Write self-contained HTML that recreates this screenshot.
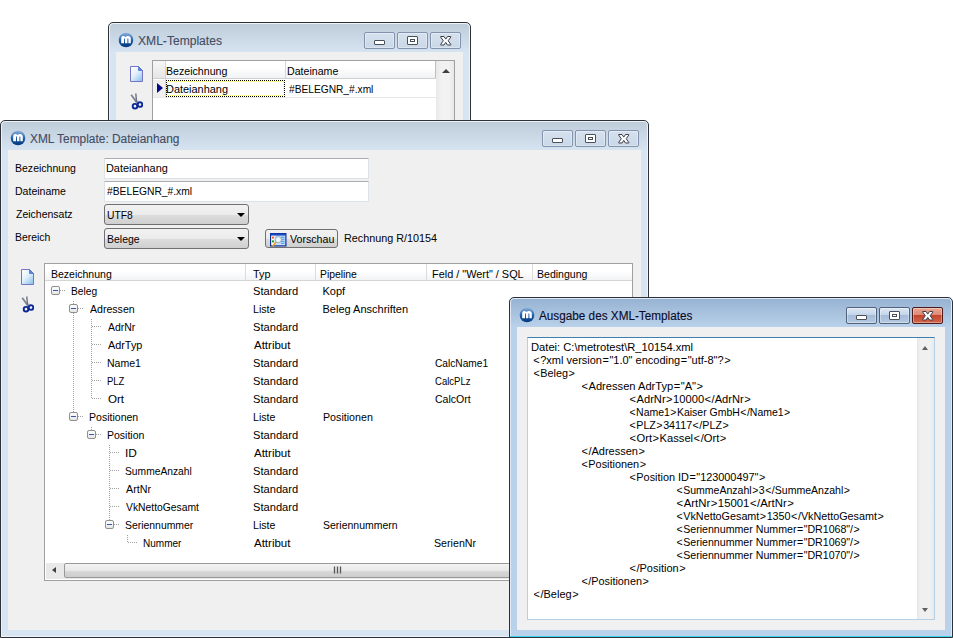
<!DOCTYPE html><html><head><meta charset="utf-8"><style>
*{margin:0;padding:0;box-sizing:border-box}
html,body{width:953px;height:638px;overflow:hidden;background:#fff;position:relative;font-family:"Liberation Sans", sans-serif}
div,svg{position:absolute}
.t,.ttl{white-space:pre;transform-origin:0 0}
i{font-style:normal;padding:0 0.5px}
.t{font-size:11px;line-height:13px;-webkit-text-stroke:0px #000;}
.ttl{font-size:12px;line-height:15px;-webkit-text-stroke:0.12px currentColor;}
.win{border:1px solid #2e3238;border-radius:5px 5px 0 0;background:#d7e4f2;box-shadow:inset 0 0 0 1px rgba(255,255,255,.55)}
.win .tgrad{left:1px;top:1px;right:1px;height:28px;border-radius:4px 4px 0 0;background:linear-gradient(#bfcddb,#d6e3f0)}
.win.act{background:#b9d1ea}
.win.act .tgrad{background:linear-gradient(#97b3d2,#b9d1ea)}
.client{background:#f0f0f0}
.tb{width:31px;height:17px;border:1px solid #8393ad;border-radius:2px;background:linear-gradient(#d6e1ee,#c9d7e7);box-shadow:inset 0 0 0 1px rgba(255,255,255,.35)}
.tba{border-color:#52617a;background:linear-gradient(#dce7f4 0%,#c5d6ea 45%,#a6bcd8 50%,#b4c9e2 100%)}
.tbc{border-color:#4b1a1a;background:linear-gradient(#e9a797 0%,#de8a76 45%,#c4452d 50%,#d1664c 100%)}
.gmin{left:9px;top:7px;width:11px;height:5px;border:1px solid #4a5058;border-radius:1px;background:#fff}
.gmax{left:9px;top:3px;width:11px;height:9px;border:1px solid #4a5058;border-radius:1px;background:#fff}
.gmax div{left:2px;top:2px;width:5px;height:3px;border:1px solid #4a5058}
.gx{left:8.5px;top:2.5px}
.tbox{border:1px solid #dde2e8;border-top-color:#abadb3;border-radius:1px;background:#fff}
.combo{border:1px solid #707070;border-radius:3px;background:linear-gradient(#f2f2f2 0%,#ebebeb 50%,#dddddd 51%,#cfcfcf 100%)}
.hdr{background:linear-gradient(#ffffff 0%,#ffffff 40%,#f1f2f4 100%)}
.vl{width:1px}
.hl{height:1px}
.dv{width:1px;background:repeating-linear-gradient(#a0a0a0 0 1px,transparent 1px 2px)}
.dh{height:1px;background:repeating-linear-gradient(90deg,#a0a0a0 0 1px,transparent 1px 2px)}
.ebox{width:9px;height:9px;border:1px solid #8f8f8f;border-radius:2px;background:linear-gradient(#fdfdfd,#e6e6e6)}
.ebox div{left:1px;top:3px;width:5px;height:1px;background:#3a5aa8}
.thumb{border:1px solid #999;border-radius:2px;background:linear-gradient(#f3f3f3 0%,#e8e8e8 50%,#d9d9d9 51%,#cdcdcd 100%)}
.carr{width:0;height:0;border-left:4px solid transparent;border-right:4px solid transparent;border-top:4px solid #000}
</style></head><body>
<div class="win" style="left:108px;top:22px;width:363px;height:130px"><div class="tgrad"></div></div>
<svg style="left:118px;top:32px" width="16" height="16" viewBox="0 0 16 16"><defs><linearGradient id="gi" x1="0" y1="0" x2="0" y2="1"><stop offset="0" stop-color="#8fb3da"/><stop offset="0.35" stop-color="#3f78bd"/><stop offset="0.7" stop-color="#0e4a94"/><stop offset="1" stop-color="#083a80"/></linearGradient></defs><circle cx="8" cy="8" r="7.3" fill="url(#gi)"/><path d="M3.2 11.2V6Q3.2 4 5.2 4Q6.6 4 7.5 5Q8.4 4 9.9 4Q12.8 4 12.8 6.6V11.2H10.4V6.9Q10.4 6.3 9.9 6.3Q9.4 6.3 9.4 6.9V11.2H7V6.9Q7 6.3 6.5 6.3Q6 6.3 6 6.9V11.2Z" fill="#fff"/></svg>
<div class="ttl" style="left:138.20px;top:34.0px;color:#444c62;transform:scaleX(1.0072);">XML-Templates</div>
<div class="tb" style="left:364px;top:32px">
<div class="gmin"></div>
</div>
<div class="tb" style="left:397px;top:32px">
<div class="gmax"><div></div></div>
</div>
<div class="tb" style="left:430px;top:32px">
<svg class="gx" width="12" height="10" viewBox="0 0 12 10"><path d="M1 0.5H4L5.75 3.1L7.5 0.5H10.5Q11.2 0.5 10.8 1.1L8.2 4.75L10.8 8.4Q11.2 9 10.5 9H7.5L5.75 6.4L4 9H1Q0.3 9 0.7 8.4L3.3 4.75L0.7 1.1Q0.3 0.5 1 0.5Z" fill="#fff" stroke="#3a3d48" stroke-width="1" stroke-linejoin="round"/></svg>
</div>
<div class="client" style="left:116px;top:52px;width:347px;height:90px"></div>
<svg style="left:130px;top:66px" width="13" height="16" viewBox="0 0 13 16"><defs><linearGradient id="dg" x1="0" y1="0" x2="0.8" y2="1"><stop offset="0" stop-color="#ffffff"/><stop offset="0.5" stop-color="#e4f1fb"/><stop offset="1" stop-color="#92c6ee"/></linearGradient></defs><path d="M0.5 0.5H8.5L12.5 4.5V15.5H0.5Z" fill="url(#dg)" stroke="#7575c2"/><path d="M8.5 0.5L12.5 4.5H8.5Z" fill="#4a8ee0" stroke="#5a6ec8" stroke-width="0.8"/></svg>
<svg style="left:130px;top:93px" width="13" height="17" viewBox="0 0 13 17"><path d="M1.2 1.8L6.8 9.5" stroke="#7d8592" stroke-width="1.8"/><path d="M5.8 0.5L6.6 9.5" stroke="#6a707c" stroke-width="1.4"/><path d="M7 9.5L8 7.5" stroke="#9aa0aa" stroke-width="1"/><circle cx="5" cy="13.2" r="2.3" fill="none" stroke="#0a2896" stroke-width="1.9"/><circle cx="10" cy="11.6" r="2.3" fill="none" stroke="#0a2896" stroke-width="1.9"/></svg>
<div style="left:152px;top:60px;width:303px;height:80px;border:1px solid #a0a0a0;background:#fff"></div>
<div class="hdr" style="left:153px;top:61px;width:283px;height:17px"></div>
<div style="left:153px;top:61px;width:13px;height:18px;background:linear-gradient(#f7f7f7,#e4e4e4)"></div>
<div class="vl" style="left:165px;top:61px;height:37px;background:#d5d5d5"></div>
<div class="vl" style="left:285px;top:61px;height:18px;background:#d5d5d5"></div>
<div class="vl" style="left:435px;top:61px;height:18px;background:#c0c0c0"></div>
<div class="hl" style="left:153px;top:78px;width:283px;background:#d0d0d0"></div>
<div class="hl" style="left:153px;top:97px;width:283px;background:#e8e8e8"></div>
<div style="left:153px;top:80px;width:12px;height:17px;background:#f0f0f0"></div>
<div style="left:157px;top:83px;width:0;height:0;border-top:5.5px solid transparent;border-bottom:5.5px solid transparent;border-left:6px solid #0a0a88"></div>
<div style="left:166px;top:80px;width:119px;height:17px;background:#fff;border:1px dotted #000;box-shadow:inset 0 0 0 1px #ffff90"></div>
<div class="t" style="left:166.34px;top:64.7px;color:#000;transform:scaleX(0.9645);">Bezeichnung</div>
<div class="t" style="left:286.63px;top:64.7px;color:#000;transform:scaleX(0.9654);">Dateiname</div>
<div class="t" style="left:166.31px;top:82.7px;color:#000;transform:scaleX(0.9934);">Dateianhang</div>
<div class="t" style="left:289.00px;top:82.7px;color:#000;transform:scaleX(0.9264);">#BELEGNR_#.xml</div>
<div style="left:436px;top:61px;width:18px;height:70px;background:linear-gradient(90deg,#e8e8e8,#f2f2f2 30%,#f2f2f2 70%,#e8e8e8)"></div>
<div style="left:442px;top:69px;width:0;height:0;border-left:4px solid transparent;border-right:4px solid transparent;border-bottom:4px solid #404040"></div>
<div class="win" style="left:0px;top:120px;width:649px;height:518px"><div class="tgrad"></div></div>
<svg style="left:10px;top:130px" width="16" height="16" viewBox="0 0 16 16"><defs><linearGradient id="gi" x1="0" y1="0" x2="0" y2="1"><stop offset="0" stop-color="#8fb3da"/><stop offset="0.35" stop-color="#3f78bd"/><stop offset="0.7" stop-color="#0e4a94"/><stop offset="1" stop-color="#083a80"/></linearGradient></defs><circle cx="8" cy="8" r="7.3" fill="url(#gi)"/><path d="M3.2 11.2V6Q3.2 4 5.2 4Q6.6 4 7.5 5Q8.4 4 9.9 4Q12.8 4 12.8 6.6V11.2H10.4V6.9Q10.4 6.3 9.9 6.3Q9.4 6.3 9.4 6.9V11.2H7V6.9Q7 6.3 6.5 6.3Q6 6.3 6 6.9V11.2Z" fill="#fff"/></svg>
<div class="ttl" style="left:30.40px;top:132.0px;color:#444c62;transform:scaleX(0.9913);">XML Template: Dateianhang</div>
<div class="tb" style="left:542px;top:130px">
<div class="gmin"></div>
</div>
<div class="tb" style="left:575px;top:130px">
<div class="gmax"><div></div></div>
</div>
<div class="tb" style="left:608px;top:130px">
<svg class="gx" width="12" height="10" viewBox="0 0 12 10"><path d="M1 0.5H4L5.75 3.1L7.5 0.5H10.5Q11.2 0.5 10.8 1.1L8.2 4.75L10.8 8.4Q11.2 9 10.5 9H7.5L5.75 6.4L4 9H1Q0.3 9 0.7 8.4L3.3 4.75L0.7 1.1Q0.3 0.5 1 0.5Z" fill="#fff" stroke="#3a3d48" stroke-width="1" stroke-linejoin="round"/></svg>
</div>
<div class="client" style="left:8px;top:150px;width:633px;height:480px"></div>
<div class="t" style="left:14.94px;top:161.7px;color:#000;transform:scaleX(0.9565);">Bezeichnung</div>
<div class="t" style="left:14.94px;top:184.7px;color:#000;transform:scaleX(0.9577);">Dateiname</div>
<div class="t" style="left:15.90px;top:207.7px;color:#000;transform:scaleX(0.9542);">Zeichensatz</div>
<div class="t" style="left:14.95px;top:231.2px;color:#000;transform:scaleX(0.9472);">Bereich</div>
<div class="tbox" style="left:104px;top:158px;width:265px;height:21px"></div>
<div class="t" style="left:105.81px;top:161.7px;color:#000;transform:scaleX(0.9902);">Dateianhang</div>
<div class="tbox" style="left:104px;top:181px;width:265px;height:21px"></div>
<div class="t" style="left:107.30px;top:184.7px;color:#000;transform:scaleX(0.9341);">#BELEGNR_#.xml</div>
<div class="combo" style="left:104px;top:204px;width:145px;height:21px"></div>
<div class="t" style="left:106.56px;top:209.2px;color:#000;transform:scaleX(0.9385);">UTF8</div>
<div class="carr" style="left:237px;top:213px"></div>
<div class="combo" style="left:104px;top:228px;width:145px;height:21px"></div>
<div class="t" style="left:106.55px;top:233.2px;color:#000;transform:scaleX(0.9515);">Belege</div>
<div class="carr" style="left:237px;top:237px"></div>
<div class="combo" style="left:265px;top:229px;width:73px;height:19px"></div>
<div class="t" style="left:289.90px;top:232.7px;color:#000;transform:scaleX(0.9667);">Vorschau</div>
<svg style="left:270px;top:233px" width="17" height="14" viewBox="0 0 17 14"><rect x="0.6" y="0.6" width="15.3" height="12.3" fill="#c8e2fb" stroke="#0b2f98" stroke-width="1.2"/><rect x="0.6" y="0.6" width="15.3" height="2" fill="#1a48c0"/><rect x="1.5" y="2.8" width="3" height="9.4" fill="#fff"/><rect x="2" y="3.6" width="2" height="2" fill="#ff5a28"/><rect x="2" y="7.4" width="2" height="2" fill="#12a018"/><path d="M11 4.2H14.5M11 6.2H14.5M11 8.2H14.5M11 10.2H14.5" stroke="#3a8ef0" stroke-width="1.1"/><circle cx="8.3" cy="6.7" r="3.1" fill="#eaf8ff" stroke="#9aa6b4" stroke-width="1"/><path d="M5.8 9.2L2.6 13.4" stroke="#f29a1c" stroke-width="1.6"/></svg>
<div class="t" style="left:343.72px;top:231.7px;color:#000;transform:scaleX(0.9819);">Rechnung R/10154</div>
<svg style="left:21px;top:269px" width="13" height="16" viewBox="0 0 13 16"><defs><linearGradient id="dg" x1="0" y1="0" x2="0.8" y2="1"><stop offset="0" stop-color="#ffffff"/><stop offset="0.5" stop-color="#e4f1fb"/><stop offset="1" stop-color="#92c6ee"/></linearGradient></defs><path d="M0.5 0.5H8.5L12.5 4.5V15.5H0.5Z" fill="url(#dg)" stroke="#7575c2"/><path d="M8.5 0.5L12.5 4.5H8.5Z" fill="#4a8ee0" stroke="#5a6ec8" stroke-width="0.8"/></svg>
<svg style="left:21px;top:296px" width="13" height="17" viewBox="0 0 13 17"><path d="M1.2 1.8L6.8 9.5" stroke="#7d8592" stroke-width="1.8"/><path d="M5.8 0.5L6.6 9.5" stroke="#6a707c" stroke-width="1.4"/><path d="M7 9.5L8 7.5" stroke="#9aa0aa" stroke-width="1"/><circle cx="5" cy="13.2" r="2.3" fill="none" stroke="#0a2896" stroke-width="1.9"/><circle cx="10" cy="11.6" r="2.3" fill="none" stroke="#0a2896" stroke-width="1.9"/></svg>
<div style="left:44px;top:263px;width:589px;height:318px;border:1px solid #a0a0a0;background:#fff"></div>
<div class="hdr" style="left:45px;top:264px;width:587px;height:17px"></div>
<div class="vl" style="left:245px;top:264px;height:16px;background:#dcdcdc"></div>
<div class="vl" style="left:315px;top:264px;height:16px;background:#dcdcdc"></div>
<div class="vl" style="left:426px;top:264px;height:16px;background:#dcdcdc"></div>
<div class="vl" style="left:532px;top:264px;height:16px;background:#dcdcdc"></div>
<div class="hl" style="left:45px;top:280px;width:587px;background:#d5d5d5"></div>
<div class="t" style="left:50.75px;top:268.2px;color:#000;transform:scaleX(0.9548);">Bezeichnung</div>
<div class="t" style="left:252.60px;top:268.2px;color:#000;transform:scaleX(0.9824);">Typ</div>
<div class="t" style="left:320.46px;top:268.2px;color:#000;transform:scaleX(0.9421);">Pipeline</div>
<div class="t" style="left:431.71px;top:268.2px;color:#000;transform:scaleX(0.9901);">Feld / "Wert" / SQL</div>
<div class="t" style="left:536.84px;top:268.2px;color:#000;transform:scaleX(0.9588);">Bedingung</div>
<div class="dv" style="left:73px;top:301px;height:111px"></div>
<div class="dv" style="left:91px;top:319px;height:80px"></div>
<div class="dv" style="left:91px;top:427px;height:3px"></div>
<div class="dv" style="left:109px;top:445px;height:75px"></div>
<div class="dv" style="left:127px;top:535px;height:8px"></div>
<div class="dh" style="left:60px;top:290px;width:6px"></div>
<div class="ebox" style="left:51px;top:286px"><div></div></div>
<div class="t" style="left:71.07px;top:284.7px;color:#000;transform:scaleX(0.9296);">Beleg</div>
<div class="t" style="left:252.69px;top:284.7px;color:#000;transform:scaleX(1.0116);">Standard</div>
<div class="t" style="left:322.50px;top:284.7px;color:#000;">Kopf</div>
<div class="dh" style="left:78px;top:308px;width:6px"></div>
<div class="ebox" style="left:69px;top:304px"><div></div></div>
<div class="t" style="left:89.80px;top:302.7px;color:#000;transform:scaleX(0.9609);">Adressen</div>
<div class="t" style="left:252.74px;top:302.7px;color:#000;transform:scaleX(0.9636);">Liste</div>
<div class="t" style="left:322.50px;top:302.7px;color:#000;">Beleg Anschriften</div>
<div class="dh" style="left:92px;top:326px;width:10px"></div>
<div class="t" style="left:107.80px;top:320.7px;color:#000;transform:scaleX(0.9483);">AdrNr</div>
<div class="t" style="left:252.69px;top:320.7px;color:#000;transform:scaleX(1.0116);">Standard</div>
<div class="dh" style="left:92px;top:344px;width:10px"></div>
<div class="t" style="left:107.80px;top:338.7px;color:#000;transform:scaleX(0.9857);">AdrTyp</div>
<div class="t" style="left:253.70px;top:338.7px;color:#000;transform:scaleX(1.0457);">Attribut</div>
<div class="dh" style="left:92px;top:362px;width:10px"></div>
<div class="t" style="left:106.84px;top:356.7px;color:#000;transform:scaleX(0.9559);">Name1</div>
<div class="t" style="left:252.69px;top:356.7px;color:#000;transform:scaleX(1.0116);">Standard</div>
<div class="t" style="left:434.50px;top:356.7px;color:#000;transform:scaleX(0.9246);">CalcName1</div>
<div class="dh" style="left:92px;top:380px;width:10px"></div>
<div class="t" style="left:106.94px;top:374.7px;color:#000;transform:scaleX(0.8632);">PLZ</div>
<div class="t" style="left:252.69px;top:374.7px;color:#000;transform:scaleX(1.0116);">Standard</div>
<div class="t" style="left:434.50px;top:374.7px;color:#000;transform:scaleX(0.8659);">CalcPLz</div>
<div class="dh" style="left:92px;top:398px;width:10px"></div>
<div class="t" style="left:107.80px;top:392.7px;color:#000;transform:scaleX(1.0533);">Ort</div>
<div class="t" style="left:252.69px;top:392.7px;color:#000;transform:scaleX(1.0116);">Standard</div>
<div class="t" style="left:434.50px;top:392.7px;color:#000;transform:scaleX(0.9595);">CalcOrt</div>
<div class="dh" style="left:78px;top:416px;width:6px"></div>
<div class="ebox" style="left:69px;top:412px"><div></div></div>
<div class="t" style="left:88.84px;top:410.7px;color:#000;transform:scaleX(0.9580);">Positionen</div>
<div class="t" style="left:252.74px;top:410.7px;color:#000;transform:scaleX(0.9636);">Liste</div>
<div class="t" style="left:322.53px;top:410.7px;color:#000;transform:scaleX(0.9700);">Positionen</div>
<div class="dh" style="left:96px;top:434px;width:6px"></div>
<div class="ebox" style="left:87px;top:430px"><div></div></div>
<div class="t" style="left:106.84px;top:428.7px;color:#000;transform:scaleX(0.9553);">Position</div>
<div class="t" style="left:252.69px;top:428.7px;color:#000;transform:scaleX(1.0116);">Standard</div>
<div class="dh" style="left:110px;top:452px;width:10px"></div>
<div class="t" style="left:124.72px;top:446.7px;color:#000;transform:scaleX(1.0800);">ID</div>
<div class="t" style="left:253.70px;top:446.7px;color:#000;transform:scaleX(1.0457);">Attribut</div>
<div class="dh" style="left:110px;top:470px;width:10px"></div>
<div class="t" style="left:124.87px;top:464.7px;color:#000;transform:scaleX(0.9343);">SummeAnzahl</div>
<div class="t" style="left:252.69px;top:464.7px;color:#000;transform:scaleX(1.0116);">Standard</div>
<div class="dh" style="left:110px;top:488px;width:10px"></div>
<div class="t" style="left:125.80px;top:482.7px;color:#000;transform:scaleX(0.9731);">ArtNr</div>
<div class="t" style="left:252.69px;top:482.7px;color:#000;transform:scaleX(1.0116);">Standard</div>
<div class="dh" style="left:110px;top:506px;width:10px"></div>
<div class="t" style="left:125.80px;top:500.7px;color:#000;transform:scaleX(0.9397);">VkNettoGesamt</div>
<div class="t" style="left:252.69px;top:500.7px;color:#000;transform:scaleX(1.0116);">Standard</div>
<div class="dh" style="left:114px;top:524px;width:6px"></div>
<div class="ebox" style="left:105px;top:520px"><div></div></div>
<div class="t" style="left:124.85px;top:518.7px;color:#000;transform:scaleX(0.9465);">Seriennummer</div>
<div class="t" style="left:252.74px;top:518.7px;color:#000;transform:scaleX(0.9636);">Liste</div>
<div class="t" style="left:322.55px;top:518.7px;color:#000;transform:scaleX(0.9532);">Seriennummern</div>
<div class="dh" style="left:128px;top:542px;width:10px"></div>
<div class="t" style="left:142.89px;top:536.7px;color:#000;transform:scaleX(0.9122);">Nummer</div>
<div class="t" style="left:253.70px;top:536.7px;color:#000;transform:scaleX(1.0457);">Attribut</div>
<div class="t" style="left:433.53px;top:536.7px;color:#000;transform:scaleX(0.9690);">SerienNr</div>
<div style="left:46px;top:563px;width:585px;height:16px;background:#e9e9e9"></div>
<div style="left:52px;top:567px;width:0;height:0;border-top:3.5px solid transparent;border-bottom:3.5px solid transparent;border-right:4px solid #404040"></div>
<div class="thumb" style="left:64px;top:563px;width:549px;height:15px"></div>
<svg style="left:333px;top:566px" width="10" height="8"><path d="M1.5 0.5V7.5M4.5 0.5V7.5M7.5 0.5V7.5" stroke="#555" stroke-width="1.3"/></svg>
<div class="win act" style="left:509px;top:297px;width:444px;height:341px"><div class="tgrad"></div></div>
<svg style="left:519px;top:307px" width="16" height="16" viewBox="0 0 16 16"><defs><linearGradient id="gi" x1="0" y1="0" x2="0" y2="1"><stop offset="0" stop-color="#8fb3da"/><stop offset="0.35" stop-color="#3f78bd"/><stop offset="0.7" stop-color="#0e4a94"/><stop offset="1" stop-color="#083a80"/></linearGradient></defs><circle cx="8" cy="8" r="7.3" fill="url(#gi)"/><path d="M3.2 11.2V6Q3.2 4 5.2 4Q6.6 4 7.5 5Q8.4 4 9.9 4Q12.8 4 12.8 6.6V11.2H10.4V6.9Q10.4 6.3 9.9 6.3Q9.4 6.3 9.4 6.9V11.2H7V6.9Q7 6.3 6.5 6.3Q6 6.3 6 6.9V11.2Z" fill="#fff"/></svg>
<div class="ttl" style="left:539.30px;top:309.0px;color:#0a0a28;transform:scaleX(0.9783);">Ausgabe des XML-Templates</div>
<div class="tb tba" style="left:846px;top:307px">
<div class="gmin"></div>
</div>
<div class="tb tba" style="left:879px;top:307px">
<div class="gmax"><div></div></div>
</div>
<div class="tb tbc" style="left:912px;top:307px">
<svg class="gx" width="12" height="10" viewBox="0 0 12 10"><path d="M1 0.5H4L5.75 3.1L7.5 0.5H10.5Q11.2 0.5 10.8 1.1L8.2 4.75L10.8 8.4Q11.2 9 10.5 9H7.5L5.75 6.4L4 9H1Q0.3 9 0.7 8.4L3.3 4.75L0.7 1.1Q0.3 0.5 1 0.5Z" fill="#fff" stroke="#3a3d48" stroke-width="1" stroke-linejoin="round"/></svg>
</div>
<div class="client" style="left:517px;top:327px;width:428px;height:303px"></div>
<div style="left:510px;top:636px;width:442px;height:1px;background:#38d6f0"></div>
<div style="left:527px;top:337px;width:408px;height:283px;border:1px solid #b5cfe7;border-top-color:#3c7fb1;background:#fff"></div>
<div style="left:917px;top:338px;width:17px;height:281px;background:linear-gradient(90deg,#e6e6e6,#f0f0f0 20%,#f0f0f0 80%,#e9e9e9)"></div>
<div style="left:922px;top:346px;width:0;height:0;border-left:3.5px solid transparent;border-right:3.5px solid transparent;border-bottom:4px solid #606060"></div>
<div style="left:922px;top:608px;width:0;height:0;border-left:3.5px solid transparent;border-right:3.5px solid transparent;border-top:4px solid #606060"></div>
<div class="t" style="left:531.38px;top:340.7px;color:#000;transform:scaleX(1.0158);">Datei: C:\metrotest\R_10154.xml</div>
<div class="t" style="left:532.80px;top:353.7px;color:#000;"><i>&lt;</i>?xml version<i>=</i>"1.0" encoding<i>=</i>"utf-8"?<i>&gt;</i></div>
<div class="t" style="left:532.92px;top:366.7px;color:#000;transform:scaleX(0.9829);"><i>&lt;</i>Beleg<i>&gt;</i></div>
<div class="t" style="left:580.69px;top:379.7px;color:#000;transform:scaleX(1.0109);"><i>&lt;</i>Adressen AdrTyp<i>=</i>"A"<i>&gt;</i></div>
<div class="t" style="left:628.99px;top:392.7px;color:#000;transform:scaleX(1.0118);"><i>&lt;</i>AdrNr<i>&gt;</i>10000<i>&lt;</i>/AdrNr<i>&gt;</i></div>
<div class="t" style="left:629.05px;top:405.7px;color:#000;transform:scaleX(0.9524);"><i>&lt;</i>Name1<i>&gt;</i>Kaiser GmbH<i>&lt;</i>/Name1<i>&gt;</i></div>
<div class="t" style="left:629.03px;top:418.7px;color:#000;transform:scaleX(0.9733);"><i>&lt;</i>PLZ<i>&gt;</i>34117<i>&lt;</i>/PLZ<i>&gt;</i></div>
<div class="t" style="left:628.99px;top:431.7px;color:#000;transform:scaleX(1.0147);"><i>&lt;</i>Ort<i>&gt;</i>Kassel<i>&lt;</i>/Ort<i>&gt;</i></div>
<div class="t" style="left:581.00px;top:444.7px;color:#000;"><i>&lt;</i>/Adressen<i>&gt;</i></div>
<div class="t" style="left:581.01px;top:457.7px;color:#000;transform:scaleX(0.9891);"><i>&lt;</i>Positionen<i>&gt;</i></div>
<div class="t" style="left:628.81px;top:470.7px;color:#000;transform:scaleX(0.9883);"><i>&lt;</i>Position ID<i>=</i>"123000497"<i>&gt;</i></div>
<div class="t" style="left:676.44px;top:483.7px;color:#000;transform:scaleX(0.9583);"><i>&lt;</i>SummeAnzahl<i>&gt;</i>3<i>&lt;</i>/SummeAnzahl<i>&gt;</i></div>
<div class="t" style="left:676.37px;top:496.7px;color:#000;transform:scaleX(1.0319);"><i>&lt;</i>ArtNr<i>&gt;</i>15001<i>&lt;</i>/ArtNr<i>&gt;</i></div>
<div class="t" style="left:676.42px;top:509.7px;color:#000;transform:scaleX(0.9796);"><i>&lt;</i>VkNettoGesamt<i>&gt;</i>1350<i>&lt;</i>/VkNettoGesamt<i>&gt;</i></div>
<div class="t" style="left:676.43px;top:522.7px;color:#000;transform:scaleX(0.9651);"><i>&lt;</i>Seriennummer Nummer<i>=</i>"DR1068"/<i>&gt;</i></div>
<div class="t" style="left:676.43px;top:535.7px;color:#000;transform:scaleX(0.9651);"><i>&lt;</i>Seriennummer Nummer<i>=</i>"DR1069"/<i>&gt;</i></div>
<div class="t" style="left:676.43px;top:548.7px;color:#000;transform:scaleX(0.9651);"><i>&lt;</i>Seriennummer Nummer<i>=</i>"DR1070"/<i>&gt;</i></div>
<div class="t" style="left:629.00px;top:561.7px;color:#000;"><i>&lt;</i>/Position<i>&gt;</i></div>
<div class="t" style="left:581.01px;top:574.7px;color:#000;transform:scaleX(0.9853);"><i>&lt;</i>/Positionen<i>&gt;</i></div>
<div class="t" style="left:533.00px;top:587.7px;color:#000;"><i>&lt;</i>/Beleg<i>&gt;</i></div>
</body></html>
